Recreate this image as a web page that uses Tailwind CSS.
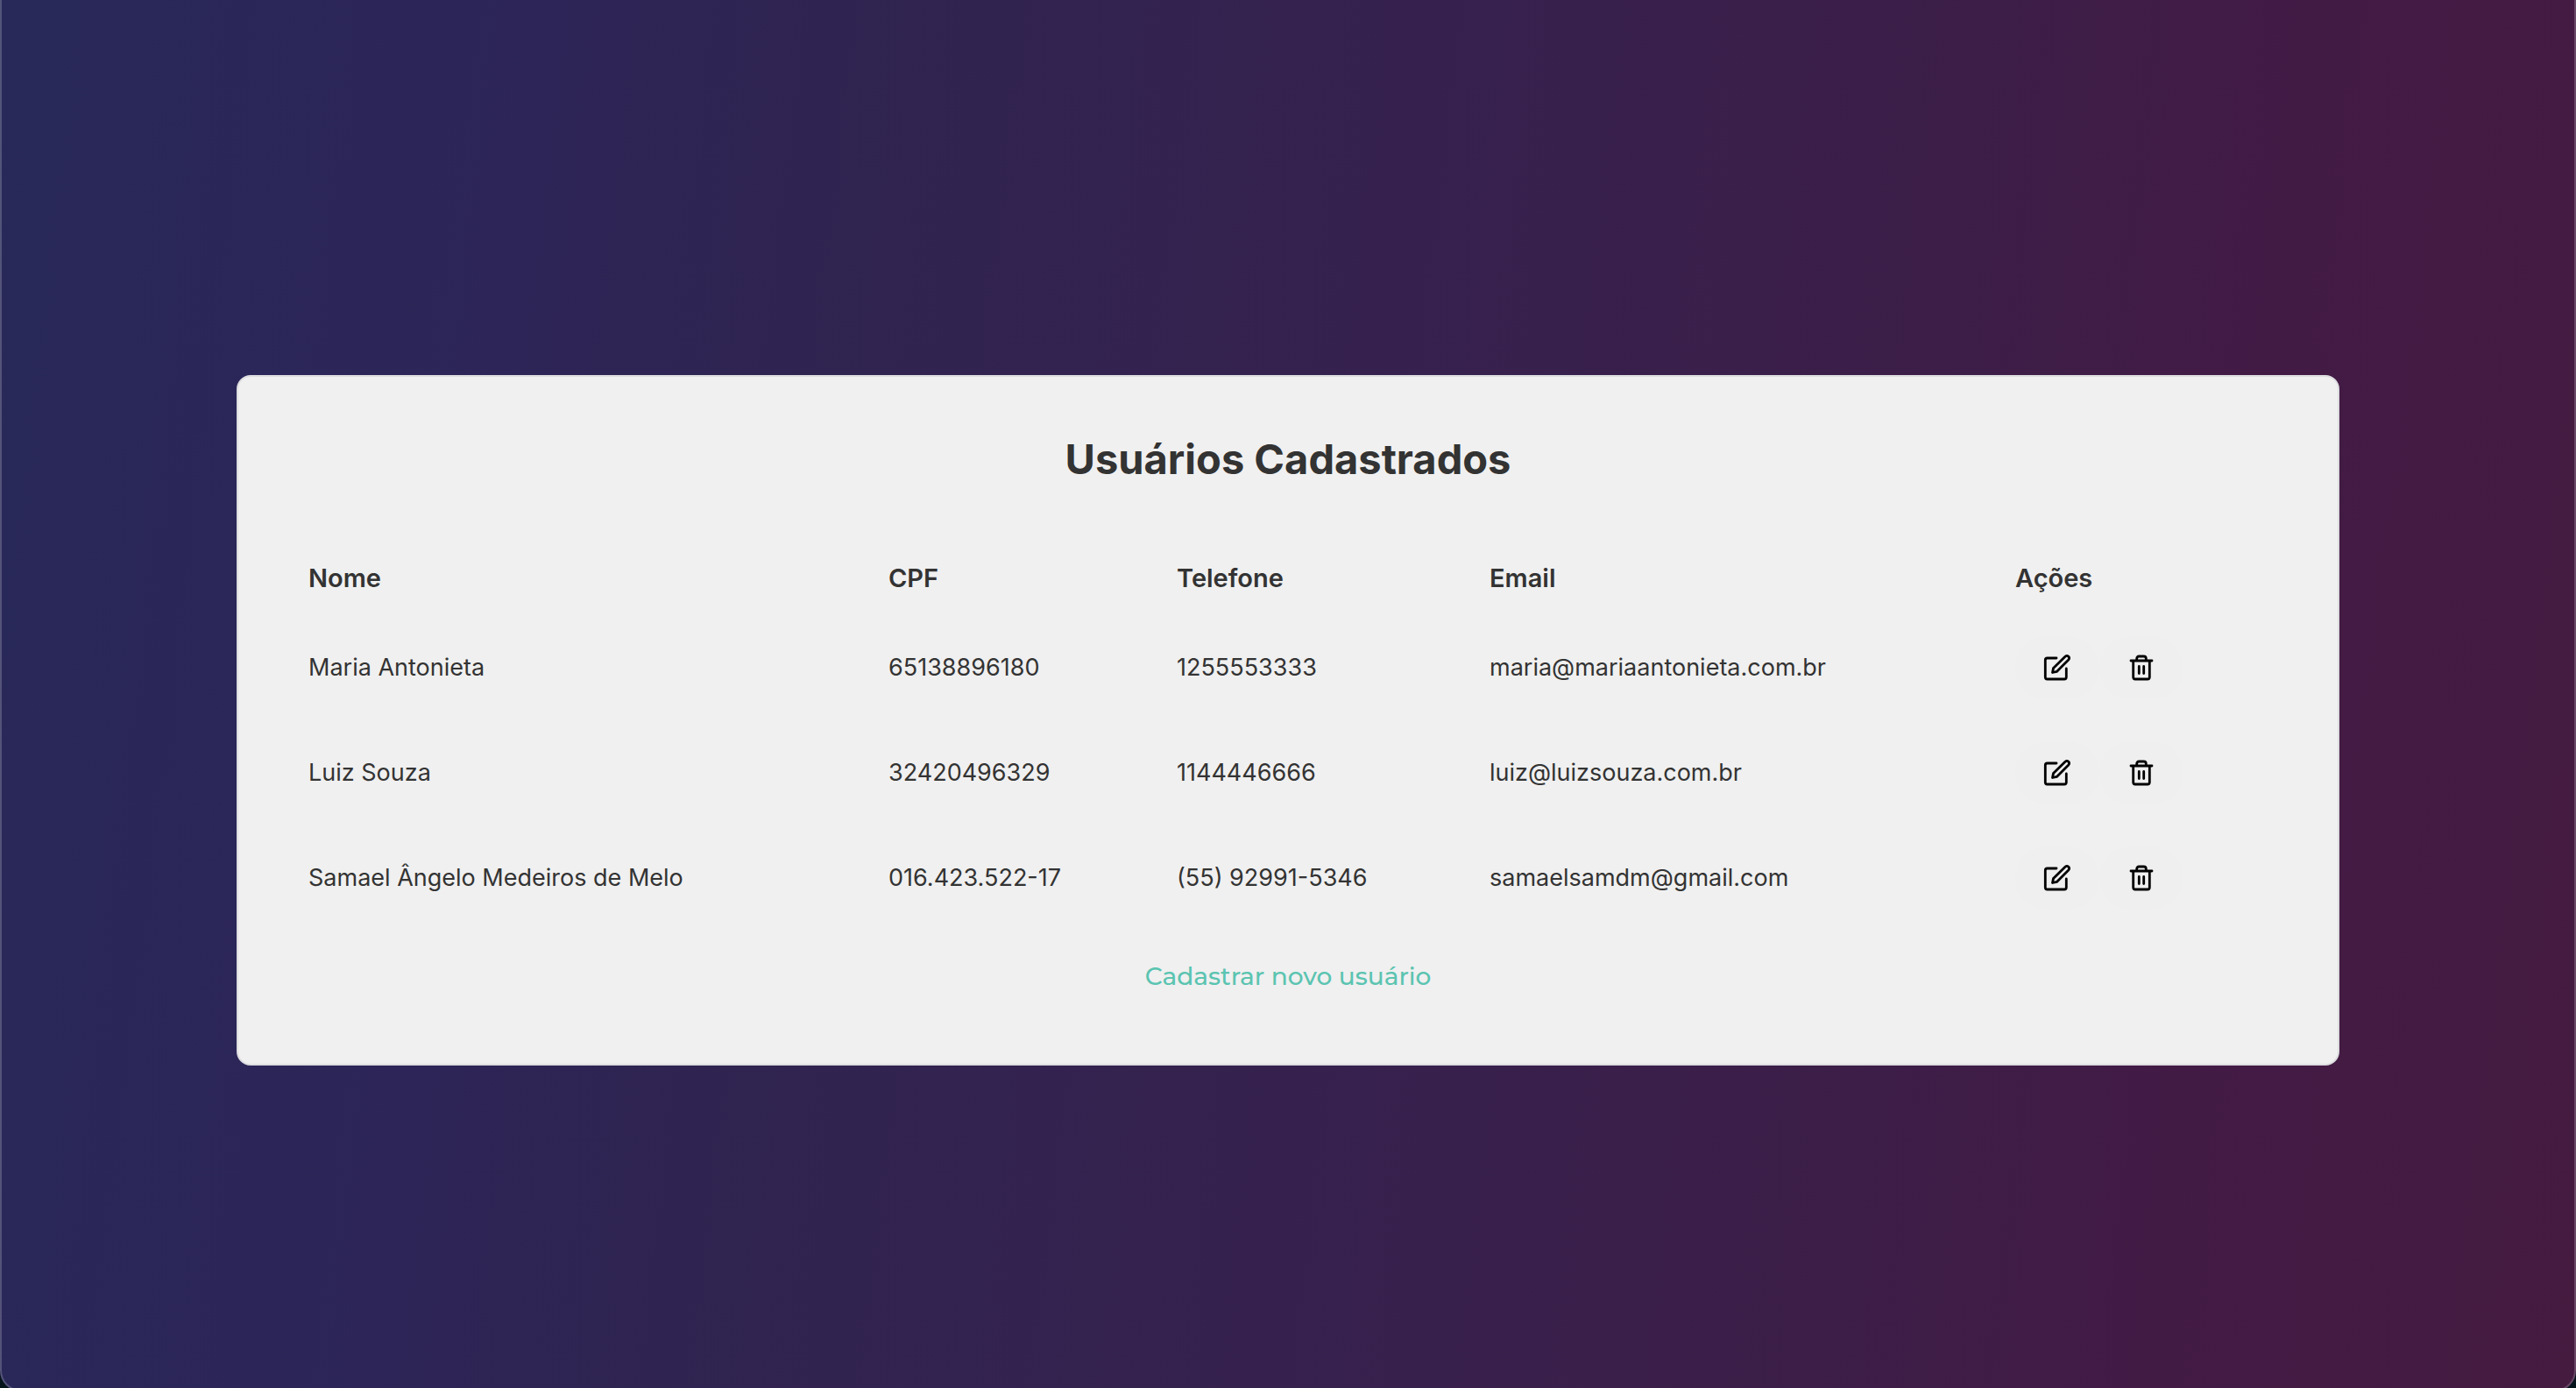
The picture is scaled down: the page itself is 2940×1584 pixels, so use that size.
<!DOCTYPE html>
<html lang="pt-BR">
<head>
<meta charset="utf-8">
<title>Usuários Cadastrados</title>
<script src="https://cdn.jsdelivr.net/npm/@tailwindcss/browser@4"></script>
</head>
<body class="h-screen overflow-hidden bg-[#06141c] font-['Inter',sans-serif] text-[#333333]">
<svg class="hidden" aria-hidden="true">
  <symbol id="edit" viewBox="0 0 32 32" fill="none" stroke="currentColor" stroke-width="2.8" stroke-linecap="round" stroke-linejoin="round">
    <path d="M15 5H4.6Q2.3 5 2.3 7.3V26.7Q2.3 29 4.6 29H24Q26.3 29 26.3 26.7V17"/>
    <path d="M10.5 21.5L11.5 16.6L25 3.2Q27 1.5 28.8 3.2Q30.4 5 28.8 6.9L15.4 20.4L10.5 21.5Z"/>
  </symbol>
  <symbol id="trash" viewBox="0 0 32 32" fill="none" stroke="currentColor" stroke-width="2.8" stroke-linecap="round" stroke-linejoin="round">
    <path d="M4 8H28M6.7 8V26.7Q6.7 29 9 29H23Q25.3 29 25.3 26.7V8M10.7 8V5.6Q10.7 3 13.3 3H18.7Q21.3 3 21.3 5.6V8M13.3 14.5V22.5M18.7 14.5V22.5"/>
  </symbol>
</svg>
<main class="flex h-[calc(100%+4px)] items-center justify-center rounded-b-3xl border-x-2 border-b-2 border-white/20 bg-linear-[97deg,#282959,#2d2557_20%,#2f2451_30%,#36214e_52%,#3c1e48_72%,#421b45_84%,#451b40] bg-origin-border pt-[58px]">
  <section class="w-full max-w-[2400px] rounded-2xl border-2 border-[#dddde0] bg-[#f0f0f0] px-14 pt-14 pb-20">
    <h1 class="text-center text-[47px] leading-[76px] font-bold">Usuários Cadastrados</h1>
    <table class="mt-14 w-full table-fixed text-left text-[27px] leading-10">
      <colgroup><col class="w-[662px]"><col class="w-[329px]"><col class="w-[357px]"><col class="w-[600px]"><col></colgroup>
      <thead class="text-[29px] leading-10">
        <tr class="h-[84px]"><th class="px-6 font-semibold">Nome</th><th class="px-6 font-semibold">CPF</th><th class="px-6 font-semibold">Telefone</th><th class="px-6 font-semibold">Email</th><th class="px-6 font-semibold">Ações</th></tr>
      </thead>
      <tbody>
        <tr class="h-[120px]"><td class="px-6">Maria Antonieta</td><td class="px-6">65138896180</td><td class="px-6">1255553333</td><td class="px-6">maria@mariaantonieta.com.br</td>
          <td class="px-6"><div class="flex text-black"><button aria-label="Editar" class="rounded-full bg-[#efefef] px-8 py-5"><svg class="size-8"><use href="#edit"/></svg></button><button aria-label="Excluir" class="rounded-full bg-[#efefef] px-8 py-5"><svg class="size-8"><use href="#trash"/></svg></button></div></td></tr>
        <tr class="h-[120px]"><td class="px-6">Luiz Souza</td><td class="px-6">32420496329</td><td class="px-6">1144446666</td><td class="px-6">luiz@luizsouza.com.br</td>
          <td class="px-6"><div class="flex text-black"><button aria-label="Editar" class="rounded-full bg-[#efefef] px-8 py-5"><svg class="size-8"><use href="#edit"/></svg></button><button aria-label="Excluir" class="rounded-full bg-[#efefef] px-8 py-5"><svg class="size-8"><use href="#trash"/></svg></button></div></td></tr>
        <tr class="h-[120px]"><td class="px-6">Samael Ângelo Medeiros de Melo</td><td class="px-6">016.423.522-17</td><td class="px-6">(55) 92991-5346</td><td class="px-6">samaelsamdm@gmail.com</td>
          <td class="px-6"><div class="flex text-black"><button aria-label="Editar" class="rounded-full bg-[#efefef] px-8 py-5"><svg class="size-8"><use href="#edit"/></svg></button><button aria-label="Excluir" class="rounded-full bg-[#efefef] px-8 py-5"><svg class="size-8"><use href="#trash"/></svg></button></div></td></tr>
      </tbody>
    </table>
    <div class="mt-8 text-center"><a href="#" class="font-['Montserrat','Inter',sans-serif] text-[28px] leading-10 font-medium text-[#5bc4b1]">Cadastrar novo usuário</a></div>
  </section>
</main>
</body>
</html>
